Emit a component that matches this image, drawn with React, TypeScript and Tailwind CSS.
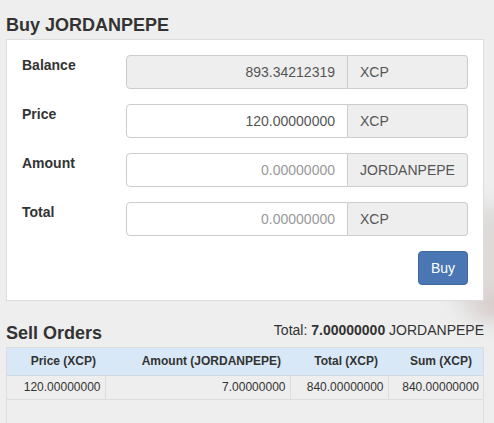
import React from "react";

type Field = { label: string; value: string; unit: string; disabled?: boolean; placeholder?: boolean };

const FIELDS: Field[] = [
  { label: "Balance", value: "893.34212319", unit: "XCP", disabled: true },
  { label: "Price", value: "120.00000000", unit: "XCP" },
  { label: "Amount", value: "0.00000000", unit: "JORDANPEPE", placeholder: true },
  { label: "Total", value: "0.00000000", unit: "XCP", placeholder: true },
];

const ORDERS = [{ price: "120.00000000", amount: "7.00000000", total: "840.00000000", sum: "840.00000000" }];

function FieldRow({ field }: { field: Field }) {
  return (
    <div className="flex items-start">
      <label className="w-[104px] shrink-0 text-[14px] leading-[20px] font-bold text-[#333]">{field.label}</label>
      <div className="flex flex-1 h-[34px]">
        <div
          className={`flex-1 flex items-center justify-end px-[12px] border border-[#ccc] rounded-l-[4px] text-[14px] ${
            field.disabled ? "bg-[#eeeeee]" : "bg-white"
          } ${field.placeholder ? "text-[#999]" : "text-[#555]"}`}
        >
          {field.value}
        </div>
        <div className="w-[120px] flex items-center px-[12px] border border-l-0 border-[#ccc] rounded-r-[4px] bg-[#eeeeee] text-[14px] text-[#555]">
          {field.unit}
        </div>
      </div>
    </div>
  );
}

export default function App() {
  return (
    <div className="relative min-h-[423px] bg-[#eeeeee] overflow-hidden font-['Liberation_Sans',Arial,sans-serif] text-[#333]">
      {/* faint background photo */}
      <div className="absolute right-[-40px] top-[205px] w-[80px] h-[120px] rounded-full bg-[#d6d2d0] blur-[10px] opacity-70" />
      <div className="absolute right-[-22px] top-[292px] w-[36px] h-[24px] rounded-full bg-[#cdb5b4] blur-[8px] opacity-40" />

      <div className="relative pl-[6px] pr-[10px] pt-[15px]">
        <h2 className="text-[18px] leading-[20px] font-bold text-[#333] mb-[4px]">Buy JORDANPEPE</h2>

        {/* Buy panel */}
        <div className="bg-white border border-[#dddddd] p-[15px]">
          <div className="flex flex-col gap-[15px]">
            {FIELDS.map((f) => (
              <FieldRow key={f.label} field={f} />
            ))}
          </div>
          <div className="flex justify-end mt-[15px]">
            <button className="h-[34px] px-[12px] rounded-[4px] bg-[#4a76b3] border border-[#41699f] text-white text-[14px]">
              Buy
            </button>
          </div>
        </div>

        {/* Sell orders */}
        <div className="flex items-end justify-between mt-[22px] mb-[4px]">
          <h3 className="text-[18px] leading-[20px] font-bold text-[#333]">Sell Orders</h3>
          <div className="relative top-[-3px] text-[14px] leading-[20px] text-[#333]">
            Total: <span className="font-bold">7.00000000</span> JORDANPEPE
          </div>
        </div>

        <div className="border border-[#dddddd] min-h-[120px]">
          <table className="w-full table-fixed border-collapse text-[12px]">
            <colgroup>
              <col className="w-[98px]" />
              <col className="w-[185px]" />
              <col className="w-[98px]" />
              <col />
            </colgroup>
            <thead>
              <tr className="bg-[#d9e8f6] h-[27px] border-b border-[#cfd8e0]">
                <th className="text-right font-bold pr-[9px]">Price (XCP)</th>
                <th className="text-right font-bold pr-[9px]">Amount (JORDANPEPE)</th>
                <th className="text-right font-bold pr-[10px]">Total (XCP)</th>
                <th className="text-right font-bold pr-[11px]">Sum (XCP)</th>
              </tr>
            </thead>
            <tbody>
              {ORDERS.map((o) => (
                <tr key={o.price} className="h-[24px] border-b border-[#dddddd] text-[#333]">
                  <td className="text-right pr-[4px] border-r border-[#dddddd]">{o.price}</td>
                  <td className="text-right pr-[4px] border-r border-[#dddddd]">{o.amount}</td>
                  <td className="text-right pr-[4px] border-r border-[#dddddd]">{o.total}</td>
                  <td className="text-right pr-[4px]">{o.sum}</td>
                </tr>
              ))}
            </tbody>
          </table>
        </div>
      </div>
    </div>
  );
}
